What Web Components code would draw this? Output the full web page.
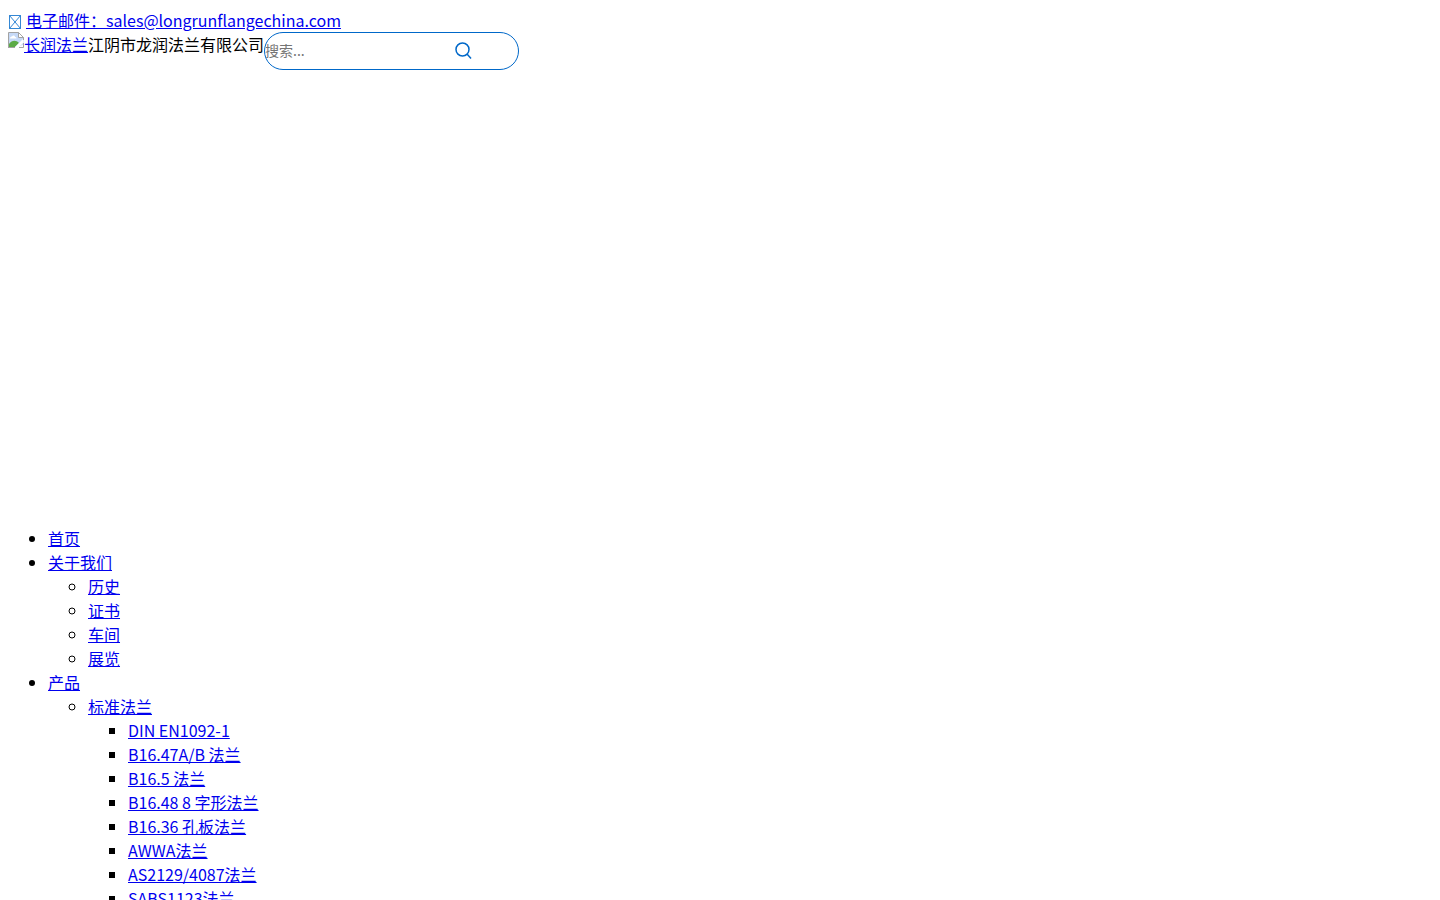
<!DOCTYPE html>
<html lang="zh-CN">
<head>
<meta charset="utf-8">
<title>江阴市龙润法兰有限公司</title>
<style>
  body {
    margin: 8px;
    background: #fff;
    color: #000;
    font: 16px/24px "Noto Sans CJK SC", sans-serif;
  }
</style>
</head>
<body>
<contact-bar></contact-bar>
<site-header>江阴市龙润法兰有限公司<search-box slot="search"></search-box></site-header>
<site-nav></site-nav>

<script>
class ShadowElement extends HTMLElement {
  constructor() {
    super();
    this.attachShadow({ mode: "open" }).innerHTML = this.constructor.markup;
  }
}

class ContactBar extends ShadowElement {
  static markup = `
    <style>
      :host { display: flex; align-items: center; gap: 4px; height: 24px; }
      a { color: #00e; }
      svg { display: block; width: 14px; height: 24px; }
    </style>
    <svg viewBox="0 0 14 24" fill="none" stroke="#0068c9" stroke-width=".8" aria-hidden="true">
      <path d="M1.5 7.5h11v13h-11zM1.5 7.5l11 13M12.5 7.5l-11 13"/>
    </svg>
    <a href="mailto:sales@longrunflangechina.com">电子邮件：sales@longrunflangechina.com</a>`;
}

class SiteHeader extends ShadowElement {
  static markup = `
    <style>
      :host { display: flex; align-items: flex-start; min-height: 478px; }
      a { display: flex; color: #00e; }
      svg { display: block; width: 16px; height: 16px; }
    </style>
    <a href="#"><svg viewBox="0 0 16 16" aria-hidden="true">
      <path d="M.5.5h10l5 5v7L9 15.5H.5z" fill="#c6d9f7"/>
      <path d="M2 6.5C2 5 3 4.500 4 4.500c1-1.500 3-1 3 .5 1 0 1.500.5 1.500 1.500z" fill="#fff"/>
      <path d="M1 15v-3c3-4 7-4 10-1l-4 4z" fill="#5cab47"/>
      <path d="M6 16l9-9v4l-5 5z" fill="#fff"/>
      <path d="M.5 16V.5h10l5 5V8M.5 15.500H7M11 15.500h4.500V11" fill="none" stroke="#a3a3a3"/>
      <path d="M10.500.5v5h5z" fill="#fff" stroke="#a3a3a3"/>
    </svg>长润法兰</a>
    <slot></slot>
    <slot name="search"></slot>`;
}

class SearchBox extends ShadowElement {
  static markup = `
    <style>
      :host { display: block; }
      form {
        display: flex; box-sizing: border-box; width: 255px; height: 38px; margin: 0;
        border: 1px solid #0068c9; border-radius: 19px; overflow: hidden;
      }
      input {
        flex: 1; min-width: 0; height: 34px; padding: 0; border: 0; outline: 0; background: none;
        font: 14px/20px "Noto Sans CJK SC", sans-serif;
      }
      input::placeholder { color: #757575; }
      button {
        display: flex; align-items: center; width: 64px; height: 36px; padding: 0;
        border: 0; background: none; color: #0068c9;
      }
      svg { width: 18px; height: 18px; }
    </style>
    <form role="search">
      <input type="text" aria-label="搜索" placeholder="搜索...">
      <button type="button" aria-label="搜索"><svg viewBox="0 0 18 18" fill="none" stroke="currentColor" stroke-width="1.500">
        <circle cx="8.500" cy="7.500" r="6.500"/><path d="M13 12l4 4.500"/>
      </svg></button>
    </form>`;
}

class SiteNav extends ShadowElement {
  static markup = `
    <style>
      :host { display: block; }
      ul { margin: 16px 0; padding-left: 40px; list-style: disc; }
      ul ul { margin: 0; list-style: circle; }
      ul ul ul { list-style: square; }
      a { color: #00e; }
    </style>
    <nav>
      <ul>
        <li><a href="#">首页</a></li>
        <li><a href="#">关于我们</a>
          <ul>
            <li><a href="#">历史</a></li>
            <li><a href="#">证书</a></li>
            <li><a href="#">车间</a></li>
            <li><a href="#">展览</a></li>
          </ul>
        </li>
        <li><a href="#">产品</a>
          <ul>
            <li><a href="#">标准法兰</a>
              <ul>
                <li><a href="#">DIN EN1092-1</a></li>
                <li><a href="#">B16.47A/B 法兰</a></li>
                <li><a href="#">B16.5 法兰</a></li>
                <li><a href="#">B16.48 8 字形法兰</a></li>
                <li><a href="#">B16.36 孔板法兰</a></li>
                <li><a href="#">AWWA法兰</a></li>
                <li><a href="#">AS2129/4087法兰</a></li>
                <li><a href="#">SABS1123法兰</a></li>
              </ul>
            </li>
          </ul>
        </li>
      </ul>
    </nav>`;
}

customElements.define("contact-bar", ContactBar);
customElements.define("search-box", SearchBox);
customElements.define("site-header", SiteHeader);
customElements.define("site-nav", SiteNav);
</script>
</body>
</html>
